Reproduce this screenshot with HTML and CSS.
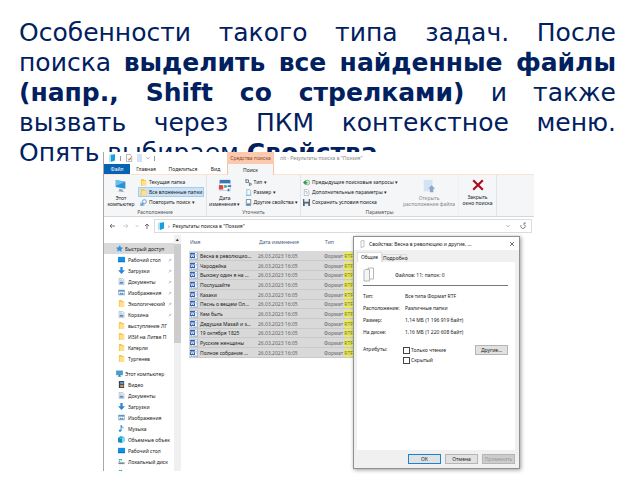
FILE: index.html
```html
<!DOCTYPE html>
<html lang="ru">
<head>
<meta charset="utf-8">
<title>Свойства найденных файлов</title>
<link rel="stylesheet" href="styles.css">
</head>
<body>
<svg class="sprite" aria-hidden="true">
  <symbol id="folder" viewBox="0 0 8 8"><path fill="#f5c84c" d="M1 0h3l1 1h2v7H1z"/><path fill="#ffe08a" d="M2 2h5v6H2z"/></symbol>
  <symbol id="word" viewBox="0 0 8 8"><path fill="#fff" stroke="#7d9cc8" stroke-width=".6" d="M1.5.3h6v7.4h-6z"/><path fill="#2f62b5" d="M0 1h5v5H0z"/><path fill="none" stroke="#fff" stroke-width=".7" d="M.8 2l.8 3 .9-2.4.9 2.4.8-3"/><path stroke="#7d9cc8" stroke-width=".6" d="M5.5 2.5H7M5.5 4H7M3 6.8h4"/></symbol>
  <symbol id="down" viewBox="0 0 8 8"><path fill="#2f86d6" d="M2.7 0h2.6v3.6H8L4 8 0 3.6h2.7z"/></symbol>
  <symbol id="desk" viewBox="0 0 8 8"><path fill="#1590e4" d="M0 1h8v6H0z"/><path fill="#0b6dc0" d="M0 6h8v1H0z"/></symbol>
  <symbol id="doc" viewBox="0 0 8 8"><path fill="#f7fafc" stroke="#8795a3" stroke-width=".6" d="M1.3.4h4l1.5 1.5v5.7H1.3z"/><path fill="#3d8fc9" d="M2 4.5h4v2H2z"/><path stroke="#8795a3" stroke-width=".6" d="M2.4 2.3h2.4M2.4 3.5h3"/></symbol>
  <symbol id="image" viewBox="0 0 8 8"><path fill="#e5f3fb" stroke="#6d8ca6" stroke-width=".6" d="M.4 1.3h7.2v5.4H.4z"/><path fill="#3c83c4" d="M.7 1.5h6.6v1.4H.7zM1 6.3l2-2 1.2 1 1-1 1.8 2z"/></symbol>
  <symbol id="pc" viewBox="0 0 8 8"><path fill="#36a4e8" stroke="#4d6e88" stroke-width=".5" d="M.4 1h7.2v4.6H.4z"/><path fill="#4d6e88" d="M3 5.7h2V7h1v.6H2V7h1z"/></symbol>
  <symbol id="video" viewBox="0 0 8 8"><path fill="#3a4148" d="M1 0h6v8H1z"/><path fill="#5d9dcf" d="M2.5 1h3.8v2.5H2.5z"/><path fill="#c59a5c" d="M2.5 4.4h3.8v2.7H2.5z"/></symbol>
  <symbol id="music" viewBox="0 0 8 8"><path fill="#2a8bdc" d="M3 0h1c0 2 3 2 2.5 4.4C6 3.200 5 3 4 2.900v3.600C3.800 8 1 8.200 1 6.500 1 5.400 2.200 5 3 5.300z"/></symbol>
  <symbol id="cube" viewBox="0 0 8 8"><path fill="#24b4de" d="M0 2l3-2 4 1-2 2z"/><path fill="#168dc0" d="M0 2l5 1v5L0 7z"/><path fill="#80dcf0" d="M5 3l3-2v5L5 8z"/></symbol>
  <symbol id="disk" viewBox="0 0 8 8"><path fill="#29a8df" d="M1 1h1.600v1.600H1zM1 3h1.600v1.400H1z"/><path fill="#1f9a78" d="M2.900 1h1.600v1.600H2.900z"/><path fill="#7d868c" d="M.5 5h7v2h-7z"/><path fill="#5fe07c" d="M6 5.600h1v.700H6z"/></symbol>
  <symbol id="star" viewBox="0 0 8 8"><path fill="#2e95dd" d="M4.500 0l1 2.700L8 3.200 6 5l.300 3L4 6.200 1 7.500 2 5 0 3.200l3-.5z"/></symbol>
  <symbol id="pin" viewBox="0 0 8 8"><path fill="none" stroke="#7b8a96" d="M1 7l2.500-2.500M3 3l2.500 2.500M4.500 1.500l2.200 2.200M4 3.600L5.600 2"/></symbol>
  <symbol id="book" viewBox="0 0 8 8"><path fill="#a9e0f7" d="M1 1l3-1v7L1 8z"/><path fill="#18a0dd" d="M3 1l4-1v6.500L3 8z"/></symbol>
  <symbol id="page" viewBox="0 0 8 8"><path fill="#fff" stroke="#8f9aa5" stroke-width=".7" d="M1.500.5H5L6.700 2v5.600H1.500z"/><path fill="#e07a54" d="M2.600 4l1.200 1.200L6 3v2L3.800 7z"/></symbol>
  <symbol id="chevron" viewBox="0 0 8 8"><path fill="none" stroke="#555" d="M1 2.500l3 3 3-3"/></symbol>
</svg>
<main class="slide">
  <p class="lead">Особенности такого типа задач. После<br>поиска <b>выделить все найденные файлы<br>(напр., Shift со стрелками)</b> и также<br>вызвать через ПКМ контекстное меню. <span class="last">Опять выбираем <b>Свойства</b>.</span></p>

  <section class="explorer" aria-label="Проводник">
    <header class="caption">
      <div class="quick"><svg class="ico"><use href="#book"/></svg><i></i><svg class="ico"><use href="#page"/></svg><span class="blank"></span><svg class="tiny"><use href="#chevron"/></svg><i></i></div>
      <span class="context">Средства поиска</span>
      <span class="title">лit - Результаты поиска в "Поэзия"</span>
    </header>
    <nav class="tabs">
      <button class="file">Файл</button><button>Главная</button><button>Поделиться</button><button>Вид</button><button class="active">Поиск</button>
    </nav>
    <div class="ribbon">
      <div class="group place">
        <div class="tools">
          <button class="big"><svg viewBox="0 0 16 16"><path fill="#2b91da" d="M2 1l11 2v8L2 9z"/><path fill="#69bdf0" d="M2 1l11 2-11 5z"/><path fill="#8fa5b5" d="M6 11l4 1v2l3 1-9-1 2-1z"/></svg>Этот<br>компьютер</button>
          <div class="stack">
            <button><svg class="ico"><use href="#folder"/></svg>Текущая папка</button>
            <button class="on"><svg class="ico"><use href="#folder"/></svg>Все вложенные папки</button>
            <button><svg class="ico" viewBox="0 0 8 8"><path fill="#9ac4e6" d="M0 4h5v4H0z"/><circle cx="5" cy="3" r="2.300" fill="#e4f3fc" stroke="#4c89bb" stroke-width=".8"/><path stroke="#4c6b85" d="M3.500 5L1.500 7.500"/></svg>Повторить поиск ▾</button>
          </div>
        </div>
        <span class="name">Расположение</span>
      </div>
      <div class="group refine">
        <div class="tools">
          <button class="big"><svg viewBox="0 0 16 16"><path fill="#fff" stroke="#9cabb8" stroke-width=".6" d="M2 2h12v11H2z"/><path fill="#3477bd" d="M2 1h12v4H2z"/><path fill="#d34b43" d="M1 7h5v5H1z"/><path fill="#43a28c" d="M7 7h3v3H7z"/><path fill="#3477bd" d="M11 7h4v2h-4zM11 11h2v3h-2z"/></svg>Дата<br>изменения ▾</button>
          <div class="stack">
            <button><svg class="ico" viewBox="0 0 8 8"><path fill="none" stroke="#577086" d="M1 0v4h3V1H1M5 4v4M6 5h1v2H6"/></svg>Тип ▾</button>
            <button><svg class="ico" viewBox="0 0 8 8"><path fill="#eef8fe" stroke="#71a6c9" stroke-width=".7" d="M2 .5h3L6.500 2v5H2z"/><path fill="#5cc8f2" d="M1 7h6v1H1z"/></svg>Размер ▾</button>
            <button><svg class="ico" viewBox="0 0 8 8"><path fill="#f8fbfd" stroke="#526c80" stroke-width=".8" d="M1.500.5h5v7h-5z"/><path fill="#4b91c8" d="M2 5h4v2H2z"/></svg>Другие свойства ▾</button>
          </div>
        </div>
        <span class="name">Уточнить</span>
      </div>
      <div class="group params">
        <div class="tools">
          <div class="stack">
            <button><svg class="ico" viewBox="0 0 8 8"><circle cx="5" cy="4" r="2.700" fill="#dceade" stroke="#778a7d" stroke-width=".7"/><path fill="#25a344" d="M0 4l3-3v2h2v2H3v2z"/></svg>Предыдущие поисковые запросы ▾</button>
            <button><svg class="ico" viewBox="0 0 8 8"><path fill="#fff" stroke="#8b9aaa" stroke-width=".6" d="M1.500.5H5L6.700 2v5.500H1.500z"/><path fill="none" stroke="#6182a0" stroke-width=".6" d="M2.500 3h2v3"/></svg>Дополнительные параметры ▾</button>
            <button><svg class="ico" viewBox="0 0 8 8"><path fill="#546577" d="M0 0h8v8H0z"/><path fill="#eaf1f6" d="M1.500 0h5v3h-5zM2 5h4v3H2z"/></svg>Сохранить условия поиска</button>
          </div>
          <button class="big faded"><svg viewBox="0 0 16 16"><path fill="#d3e3f4" d="M2 1h10v13H2z"/><path fill="#8ea6c8" d="M11 7l4 4h-2v4h-4v-4H7z"/></svg>Открыть<br>расположение файла</button>
        </div>
        <span class="name">Параметры</span>
      </div>
      <div class="group finish">
        <div class="tools">
          <button class="big"><svg viewBox="0 0 16 16"><path fill="none" stroke="#a60e18" stroke-width="2.400" d="M2.500 2.500l11 11M13.500 2.500l-11 11"/></svg>Закрыть<br>окно поиска</button>
        </div>
      </div>
    </div>
    <div class="address">
      <svg viewBox="0 0 50 10" class="arrows"><path fill="none" stroke="#555" stroke-width=".8" d="M6 5h5M8 3L6 5l2 2M43 8V3M41 5l2-2 2 2"/><path fill="none" stroke="#c4c4c4" stroke-width=".8" d="M19 5h5M22 3l2 2-2 2"/><path fill="none" stroke="#888" stroke-width=".7" d="M32 4.500l1 1 1-1"/></svg>
      <div class="path"><svg class="ico"><use href="#book"/></svg><span>›</span><span class="where">Результаты поиска в "Поэзия"</span><svg class="tiny"><use href="#chevron"/></svg><svg class="ico" viewBox="0 0 8 8"><path fill="none" stroke="#666" stroke-width=".8" d="M2.200 3A2.200 2.200 0 1 0 5.800 3M4 2h2V0"/></svg></div>
    </div>
    <div class="content">
      <aside class="side">
        <ul>
          <li class="root current"><svg class="ico"><use href="#star"/></svg><span>Быстрый доступ</span></li>
          <li><svg class="ico"><use href="#desk"/></svg><span>Рабочий стол</span><svg class="pin"><use href="#pin"/></svg></li>
          <li><svg class="ico"><use href="#down"/></svg><span>Загрузки</span><svg class="pin"><use href="#pin"/></svg></li>
          <li><svg class="ico"><use href="#doc"/></svg><span>Документы</span><svg class="pin"><use href="#pin"/></svg></li>
          <li><svg class="ico"><use href="#image"/></svg><span>Изображения</span><svg class="pin"><use href="#pin"/></svg></li>
          <li><svg class="ico"><use href="#folder"/></svg><span>Экологический</span><svg class="pin"><use href="#pin"/></svg></li>
          <li><svg class="ico"><use href="#doc"/></svg><span>Корзина</span><svg class="pin"><use href="#pin"/></svg></li>
          <li><svg class="ico"><use href="#folder"/></svg><span>выступление ЛГ</span></li>
          <li><svg class="ico"><use href="#folder"/></svg><span>ИЗИ на Литве П</span></li>
          <li><svg class="ico"><use href="#folder"/></svg><span>Катерли</span></li>
          <li><svg class="ico"><use href="#folder"/></svg><span>Тургенев</span></li>
          <li class="root gap"><svg class="ico"><use href="#pc"/></svg><span>Этот компьютер</span></li>
          <li><svg class="ico"><use href="#video"/></svg><span>Видео</span></li>
          <li><svg class="ico"><use href="#doc"/></svg><span>Документы</span></li>
          <li><svg class="ico"><use href="#down"/></svg><span>Загрузки</span></li>
          <li><svg class="ico"><use href="#image"/></svg><span>Изображения</span></li>
          <li><svg class="ico"><use href="#music"/></svg><span>Музыка</span></li>
          <li><svg class="ico"><use href="#cube"/></svg><span>Объемные объек</span></li>
          <li><svg class="ico"><use href="#desk"/></svg><span>Рабочий стол</span></li>
          <li><svg class="ico"><use href="#disk"/></svg><span>Локальный диск</span></li>
          <li><svg class="ico"><use href="#disk"/></svg><span>Локальный диск</span></li>
        </ul>
        <div class="scroll"><span class="up">▴</span><span class="thumb"></span></div>
      </aside>
      <div class="list">
        <table>
          <thead><tr><th>Имя</th><th class="date">Дата изменения</th><th class="type">Тип</th></tr></thead>
          <tbody>
            <tr><td><svg class="ico"><use href="#word"/></svg>Весна в революцио…</td><td>26.03.2023 16:05</td><td>Формат <mark>RTF</mark></td></tr>
            <tr><td><svg class="ico"><use href="#word"/></svg>Чародейка</td><td>26.03.2023 16:05</td><td>Формат <mark>RTF</mark></td></tr>
            <tr><td><svg class="ico"><use href="#word"/></svg>Выхожу один я на …</td><td>26.03.2023 16:05</td><td>Формат <mark>RTF</mark></td></tr>
            <tr><td><svg class="ico"><use href="#word"/></svg>Послушайте</td><td>26.03.2023 16:05</td><td>Формат <mark>RTF</mark></td></tr>
            <tr><td><svg class="ico"><use href="#word"/></svg>Казаки</td><td>26.03.2023 16:05</td><td>Формат <mark>RTF</mark></td></tr>
            <tr><td><svg class="ico"><use href="#word"/></svg>Песнь о вещем Ол…</td><td>26.03.2023 16:05</td><td>Формат <mark>RTF</mark></td></tr>
            <tr><td><svg class="ico"><use href="#word"/></svg>Кем быть</td><td>26.03.2023 16:05</td><td>Формат <mark>RTF</mark></td></tr>
            <tr><td><svg class="ico"><use href="#word"/></svg>Дедушка Мазай и з…</td><td>26.03.2023 16:05</td><td>Формат <mark>RTF</mark></td></tr>
            <tr><td><svg class="ico"><use href="#word"/></svg>19 октября 1825</td><td>26.03.2023 16:05</td><td>Формат <mark>RTF</mark></td></tr>
            <tr><td><svg class="ico"><use href="#word"/></svg>Русские женщины</td><td>26.03.2023 16:05</td><td>Формат <mark>RTF</mark></td></tr>
            <tr><td><svg class="ico"><use href="#word"/></svg>Полное собрание …</td><td>26.03.2023 16:05</td><td>Формат <mark>RTF</mark></td></tr>
          </tbody>
        </table>
      </div>
    </div>

    <form class="dialog" aria-label="Свойства">
      <header><svg class="ico" viewBox="0 0 8 8"><path fill="#fff" stroke="#999" stroke-width=".6" d="M3 1l3-.5v6L3 7.500z"/></svg><span>Свойства: Весна в революцию и другие, …</span><button type="button" class="close" aria-label="Закрыть"><svg viewBox="0 0 6 6"><path stroke="#333" stroke-width=".7" d="M1 1l4 4M5 1L1 5"/></svg></button></header>
      <div class="sheets"><button type="button" class="active">Общие</button><button type="button">Подробно</button></div>
      <div class="panel">
        <div class="summary"><svg viewBox="0 0 12 16"><path fill="#fff" stroke="#a5a5a5" stroke-width=".8" d="M5 1h5.500v11H5z"/><path fill="#f5f5f5" stroke="#a5a5a5" stroke-width=".8" d="M1 3.500l1-1h4.500v11.500H1z"/></svg><span>Файлов: 11; папок: 0</span></div>
        <dl>
          <dt>Тип:</dt><dd>Все типа Формат RTF</dd>
          <dt>Расположение:</dt><dd>Различные папки</dd>
          <dt>Размер:</dt><dd>1,14 МБ (1 196 919 байт)</dd>
          <dt>На диске:</dt><dd>1,16 МБ (1 220 608 байт)</dd>
        </dl>
        <div class="attrs">
          <span>Атрибуты:</span>
          <div class="checks"><label><input type="checkbox">Только чтение</label><label><input type="checkbox">Скрытый</label></div>
          <button type="button" class="push">Другие…</button>
        </div>
      </div>
      <footer><button type="button" class="push ok">ОК</button><button type="button" class="push">Отмена</button><button type="button" class="push" disabled>Применить</button></footer>
    </form>
  </section>
</main>
</body>
</html>
```
FILE: styles.css
```css
* { box-sizing: border-box; }
body { margin: 0; background: #fff; }
.sprite { display: none; }
.slide { position: relative; min-height: 100vh; padding: 18px 24px 0 19px; }
.lead {
  margin: 0;
  color: #002060;
  font: 25px/30px "DejaVu Sans", sans-serif;
  text-align: justify;
  text-align-last: justify;
}
.last { display: block; text-align-last: left; }

.explorer {
  position: absolute;
  top: 152px;
  left: 103px;
  right: 106px;
  border-left: 1px solid #a8a8a8;
  background: #fff;
  color: #222;
  font: 5px/8px "Noto Sans", sans-serif;
  white-space: nowrap;
}
.explorer button {
  margin: 0;
  padding: 0;
  border: 0;
  background: none;
  color: inherit;
  font: inherit;
}
.ico { flex: none; width: 8px; height: 8px; }
.tiny { flex: none; width: 4px; height: 4px; }

.caption { display: flex; height: 12px; align-items: center; }
.quick { display: flex; align-items: center; gap: 4px; width: 123px; padding-left: 4px; }
.quick i { width: 1px; height: 5px; background: #999; }
.blank { width: 5px; height: 8px; background: #d5e2f3; }
.context { width: 47px; background: #fbc9ad; color: #8a4a2c; line-height: 12px; text-align: center; }
.title { padding-left: 6px; color: #888; }

.tabs { display: flex; height: 11px; border-bottom: 1px solid #fbe3d2; }
.explorer .tabs button { width: 32px; line-height: 10px; }
.explorer .tabs button:nth-child(3) { width: 42px; }
.explorer .tabs button:nth-child(4) { width: 23px; }
.explorer .tabs .file { width: 26px; background: #0563b1; color: #fff; }
.explorer .tabs .active { width: 47px; height: 11px; background: #f5f6f8; border: solid #f6c3a5; border-width: 0 1px; }

.ribbon { display: flex; height: 42px; background: #f5f6f8; border-bottom: 1px solid #d5d7da; }
.group { display: flex; flex-direction: column; justify-content: space-between; border-right: 1px solid #e2e4e7; }
.place { width: 103px; }
.refine { width: 94px; }
.params { width: 158px; border-right-color: #eff0f2; }
.finish { width: 38px; }
.tools { display: flex; padding-top: 2px; }
.name { align-self: center; color: #555; }
.stack { display: flex; flex-direction: column; }
.stack button { display: flex; align-items: center; gap: 2px; height: 10px; }
.explorer .stack button { padding: 0 2px; }
.stack .ico { width: 7px; height: 7px; }
.explorer .stack .on { background: #cbe2f7; outline: 1px solid #a4cdf2; outline-offset: -1px; }
.explorer .big { width: 34px; line-height: 6px; }
.big svg { display: block; width: 14px; height: 14px; margin: 1px auto 2px; }
.explorer .refine .big { width: 36px; }
.explorer .params .big, .explorer .finish .big { flex: 1; }
.explorer .faded { color: #888; }

.address { display: flex; align-items: center; height: 18px; }
.arrows { width: 50px; height: 10px; }
.path { display: flex; flex: 1; align-items: center; gap: 3px; height: 14px; margin-right: 2px; padding: 0 4px 0 2px; border: 1px solid #dcdcdc; }
.where { flex: 1; }
.path .ico:last-child { margin-left: 6px; }

.content { display: flex; height: 236px; overflow: hidden; }
.side { display: flex; width: 77px; }
.side ul { flex: 1; min-width: 0; margin: 0; padding: 8px 0 0; list-style: none; }
.side li { display: flex; align-items: center; gap: 3px; height: 11px; padding-left: 14px; }
.side li span { flex: 1; overflow: hidden; }
.side .ico { width: 7px; height: 7px; }
.side .root { padding-left: 12px; gap: 2px; }
.side .current { background: #d9d9d9; }
.side .gap { margin-top: 4px; }
.side .pin { flex: none; width: 4px; height: 4px; margin-right: 2px; }
.scroll { width: 7px; background: #f0f0f0; text-align: center; }
.up { display: block; height: 9px; }
.thumb { display: block; height: 99px; background: #cdcdcd; }

.list { flex: 1; padding: 1px 0 0 8px; }
table { width: 166px; table-layout: fixed; border-spacing: 0; }
th, td { padding: 0; text-align: left; font-weight: 400; }
th { height: 15px; padding: 2px 0 0 1px; color: #4b607c; vertical-align: top; }
.date { width: 66px; }
.type { width: 31px; }
tbody { background: #d9d9d9; }
td { height: 10px; border-bottom: 1px solid #c9c9c9; color: #666; line-height: 8px; overflow: hidden; }
tr:nth-child(3n) td { height: 9px; }
td:first-child { padding-left: 1px; color: #222; }
td .ico { width: 8px; height: 8px; margin-right: 2px; vertical-align: top; }
mark { padding: 1px 0; background: #eaea68; color: #777720; }

.dialog {
  position: absolute;
  top: 84px;
  right: 14px;
  width: 167px;
  border: 1px solid #909090;
  background: #f0f0f0;
  box-shadow: 1px 1px 4px #0006;
}
.dialog header { display: flex; align-items: center; gap: 3px; height: 13px; padding: 0 4px; background: #fff; }
.dialog header span { flex: 1; }
.close svg { display: block; width: 6px; height: 6px; }
.sheets { display: flex; align-items: flex-end; height: 12px; padding-left: 3px; }
.explorer .sheets button { width: 25px; height: 8px; border: 1px solid #ddd; border-bottom: 0; line-height: 7px; }
.explorer .sheets .active { height: 10px; background: #fff; }
.panel { height: 188px; margin: 0 4px 0 3px; padding: 3px 7px 0 6px; background: #fff; }
.summary { display: flex; align-items: center; gap: 20px; height: 21px; border-bottom: 1px solid #777; }
.summary svg { width: 12px; height: 16px; }
dl { display: grid; grid-template-columns: 42px 1fr; grid-auto-rows: 12px; margin: 4px 0 0; line-height: 12px; }
dd { margin: 0; }
.attrs { display: flex; margin-top: 7px; }
.attrs > span { width: 40px; }
.checks { flex: 1; }
.checks label { display: flex; align-items: center; gap: 1px; height: 10px; }
.checks input { appearance: none; width: 7px; height: 7px; margin: 0; border: 1px solid #444; background: #fff; }
.explorer .push { width: 33px; height: 10px; background: #e1e1e1; border: 1px solid #b5b5b5; line-height: 8px; }
.dialog footer { display: flex; justify-content: flex-end; gap: 4px; padding: 4px 4px 4px; }
.explorer .ok { border-color: #1683d8; }
.explorer .push:disabled { background: #ccc; color: #999; }
```
